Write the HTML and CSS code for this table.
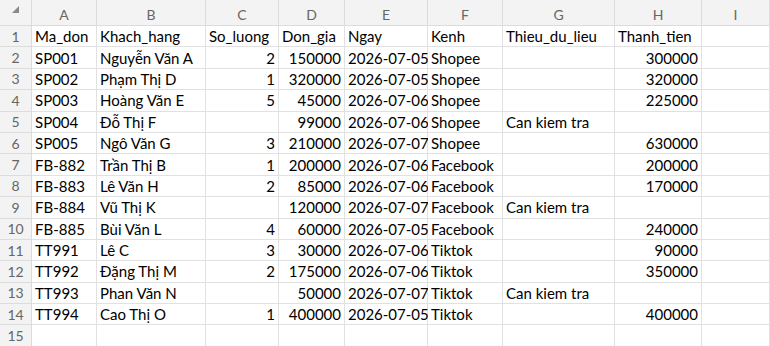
FILE: index.html
```html
<!DOCTYPE html>
<html>
<head>
<meta charset="utf-8">
<link rel="stylesheet" href="styles.css">
</head>
<body>
<div class="sheet" id="sheet">
  <div class="hd corner"><svg width="9" height="9" viewBox="0 0 9 9"><polygon points="8,1 8,8 1,8" fill="#8a8a8a"/></svg></div>
  <div class="hd col">A</div><div class="hd col">B</div><div class="hd col">C</div><div class="hd col">D</div><div class="hd col">E</div><div class="hd col">F</div><div class="hd col">G</div><div class="hd col">H</div><div class="hd col">I</div>

  <div class="hd row">1</div><div class="c">Ma_don</div><div class="c">Khach_hang</div><div class="c">So_luong</div><div class="c">Don_gia</div><div class="c">Ngay</div><div class="c">Kenh</div><div class="c">Thieu_du_lieu</div><div class="c">Thanh_tien</div><div class="c"></div>

  <div class="hd row">2</div><div class="c">SP001</div><div class="c">Nguyễn Văn A</div><div class="c n">2</div><div class="c n">150000</div><div class="c">2026-07-05</div><div class="c">Shopee</div><div class="c"></div><div class="c n">300000</div><div class="c"></div>

  <div class="hd row">3</div><div class="c">SP002</div><div class="c">Phạm Thị D</div><div class="c n">1</div><div class="c n">320000</div><div class="c">2026-07-05</div><div class="c">Shopee</div><div class="c"></div><div class="c n">320000</div><div class="c"></div>

  <div class="hd row">4</div><div class="c">SP003</div><div class="c">Hoàng Văn E</div><div class="c n">5</div><div class="c n">45000</div><div class="c">2026-07-06</div><div class="c">Shopee</div><div class="c"></div><div class="c n">225000</div><div class="c"></div>

  <div class="hd row">5</div><div class="c">SP004</div><div class="c">Đỗ Thị F</div><div class="c n"></div><div class="c n">99000</div><div class="c">2026-07-06</div><div class="c">Shopee</div><div class="c">Can kiem tra</div><div class="c n"></div><div class="c"></div>

  <div class="hd row">6</div><div class="c">SP005</div><div class="c">Ngô Văn G</div><div class="c n">3</div><div class="c n">210000</div><div class="c">2026-07-07</div><div class="c">Shopee</div><div class="c"></div><div class="c n">630000</div><div class="c"></div>

  <div class="hd row">7</div><div class="c">FB-882</div><div class="c">Trần Thị B</div><div class="c n">1</div><div class="c n">200000</div><div class="c">2026-07-06</div><div class="c">Facebook</div><div class="c"></div><div class="c n">200000</div><div class="c"></div>

  <div class="hd row">8</div><div class="c">FB-883</div><div class="c">Lê Văn H</div><div class="c n">2</div><div class="c n">85000</div><div class="c">2026-07-06</div><div class="c">Facebook</div><div class="c"></div><div class="c n">170000</div><div class="c"></div>

  <div class="hd row">9</div><div class="c">FB-884</div><div class="c">Vũ Thị K</div><div class="c n"></div><div class="c n">120000</div><div class="c">2026-07-07</div><div class="c">Facebook</div><div class="c">Can kiem tra</div><div class="c n"></div><div class="c"></div>

  <div class="hd row">10</div><div class="c">FB-885</div><div class="c">Bùi Văn L</div><div class="c n">4</div><div class="c n">60000</div><div class="c">2026-07-05</div><div class="c">Facebook</div><div class="c"></div><div class="c n">240000</div><div class="c"></div>

  <div class="hd row">11</div><div class="c">TT991</div><div class="c">Lê C</div><div class="c n">3</div><div class="c n">30000</div><div class="c">2026-07-06</div><div class="c">Tiktok</div><div class="c"></div><div class="c n">90000</div><div class="c"></div>

  <div class="hd row">12</div><div class="c">TT992</div><div class="c">Đặng Thị M</div><div class="c n">2</div><div class="c n">175000</div><div class="c">2026-07-06</div><div class="c">Tiktok</div><div class="c"></div><div class="c n">350000</div><div class="c"></div>

  <div class="hd row">13</div><div class="c">TT993</div><div class="c">Phan Văn N</div><div class="c n"></div><div class="c n">50000</div><div class="c">2026-07-07</div><div class="c">Tiktok</div><div class="c">Can kiem tra</div><div class="c n"></div><div class="c"></div>

  <div class="hd row">14</div><div class="c">TT994</div><div class="c">Cao Thị O</div><div class="c n">1</div><div class="c n">400000</div><div class="c">2026-07-05</div><div class="c">Tiktok</div><div class="c"></div><div class="c n">400000</div><div class="c"></div>

  <div class="hd row">15</div><div class="c"></div><div class="c"></div><div class="c"></div><div class="c"></div><div class="c"></div><div class="c"></div><div class="c"></div><div class="c"></div><div class="c"></div>
</div>
</body>
</html>
```

FILE: styles.css
```css
html, body {
  margin: 0;
  padding: 0;
  background: #ffffff;
  overflow: hidden;
}
.sheet {
  display: grid;
  grid-template-columns: 32px 65px 109px 73px 66px 83px 75px 112px 87px 68px;
  grid-template-rows: 26px repeat(15, 21.4px);
  width: 770px;
  font-family: Lato, "Liberation Sans", sans-serif;
  font-size: 15px;
  color: #000;
}
.sheet > div {
  box-sizing: border-box;
  border-right: 1px solid #e1e1e1;
  border-bottom: 1px solid #e1e1e1;
  display: flex;
  align-items: center;
  white-space: nowrap;
  overflow: visible;
}
.c {
  padding: 0 3px;
  background: #fff;
}
.c.n {
  justify-content: flex-end;
}
.hd {
  background: #f3f3f3;
  color: #666;
  font-size: 14px;
  justify-content: center;
}
.sheet > .hd {
  border-color: #dcdcdc;
}
.col {
  padding-top: 4px;
}
.corner {
  justify-content: flex-end;
  align-items: flex-end;
  padding: 0 11px 6px 0;
}
.corner svg {
  display: block;
}
```
